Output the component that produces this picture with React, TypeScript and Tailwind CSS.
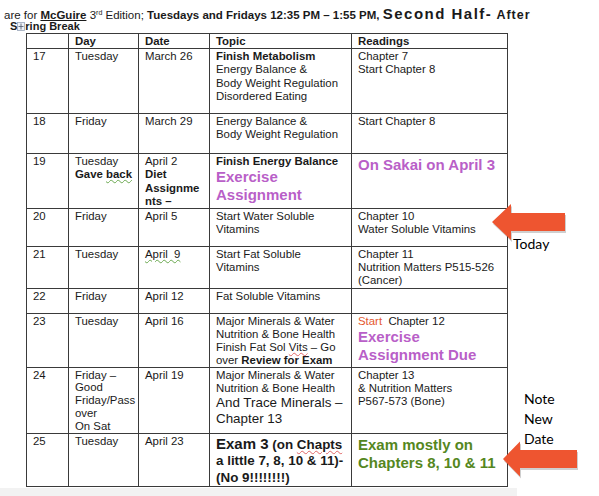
import React from 'react';

type Row = {
  n: string;
  h: string;
  day: React.ReactNode;
  date: React.ReactNode;
  topic: React.ReactNode;
  reading: React.ReactNode;
};

const cell = 'border border-[#3a3a3a] align-top pl-[6px] pr-[2px] pt-[1px] leading-[13.2px] whitespace-nowrap';

const rows: Row[] = [
  {
    n: '17',
    h: 'h-[65px]',
    day: 'Tuesday',
    date: 'March 26',
    topic: (
      <>
        <b>Finish Metabolism</b>
        <br />Energy Balance &amp;
        <br />Body Weight Regulation
        <br />Disordered Eating
      </>
    ),
    reading: (
      <>
        Chapter 7
        <br />Start Chapter 8
      </>
    ),
  },
  {
    n: '18',
    h: 'h-[40px]',
    day: 'Friday',
    date: 'March 29',
    topic: (
      <>
        Energy Balance &amp;
        <br />Body Weight Regulation
      </>
    ),
    reading: 'Start Chapter 8',
  },
  {
    n: '19',
    h: 'h-[53px]',
    day: (
      <>
        Tuesday
        <br />
        <b>
          Gave <span className="underline decoration-wavy decoration-[#6aa84f] decoration-1">back</span>
        </b>
      </>
    ),
    date: (
      <>
        April 2
        <br />
        <b>
          Diet
          <br />Assignme
          <br />nts –
        </b>
      </>
    ),
    topic: (
      <>
        <b>Finish Energy Balance</b>
        <div className="text-[15px] leading-[18px] font-bold text-[#b95fc8]">
          Exercise
          <br />Assignment
        </div>
      </>
    ),
    reading: <div className="text-[15px] leading-[18px] font-bold text-[#b95fc8] pt-[1px]">On Sakai on April 3</div>,
  },
  {
    n: '20',
    h: 'h-[38px]',
    day: 'Friday',
    date: 'April 5',
    topic: (
      <>
        Start Water Soluble
        <br />Vitamins
      </>
    ),
    reading: (
      <>
        Chapter 10
        <br />Water Soluble Vitamins
      </>
    ),
  },
  {
    n: '21',
    h: 'h-[40px]',
    day: 'Tuesday',
    date: <span className="underline decoration-wavy decoration-[#6aa84f] decoration-1 whitespace-pre">April  9</span>,
    topic: (
      <>
        Start Fat Soluble
        <br />Vitamins
      </>
    ),
    reading: (
      <>
        Chapter 11
        <br />Nutrition Matters P515-526
        <br />(Cancer)
      </>
    ),
  },
  {
    n: '22',
    h: 'h-[25px]',
    day: 'Friday',
    date: 'April 12',
    topic: 'Fat Soluble Vitamins',
    reading: '',
  },
  {
    n: '23',
    h: 'h-[53px]',
    day: 'Tuesday',
    date: 'April 16',
    topic: (
      <div className="leading-[13px]">
        Major Minerals &amp; Water
        <br />Nutrition &amp; Bone Health
        <br />Finish Fat Sol <span className="underline decoration-wavy decoration-[#e06666] decoration-1">Vits</span> – Go
        <br />over <b>Review for Exam</b>
      </div>
    ),
    reading: (
      <>
        <span className="text-[#e4572e]">Start</span>&nbsp; Chapter 12
        <div className="text-[15px] leading-[18px] font-bold text-[#b95fc8]">
          Exercise
          <br />Assignment Due
        </div>
      </>
    ),
  },
  {
    n: '24',
    h: 'h-[65px]',
    day: (
      <div className="leading-[12.8px]">
        Friday –
        <br />Good
        <br />Friday/Pass
        <br />over
        <br />On Sat
      </div>
    ),
    date: 'April 19',
    topic: (
      <>
        Major Minerals &amp; Water
        <br />Nutrition &amp; Bone Health
        <div className="text-[13.4px] leading-[16px]">
          And Trace Minerals –
          <br />Chapter 13
        </div>
      </>
    ),
    reading: (
      <>
        Chapter 13
        <br />&amp; Nutrition Matters
        <br />P567-573 (Bone)
      </>
    ),
  },
  {
    n: '25',
    h: 'h-[53px]',
    day: 'Tuesday',
    date: 'April 23',
    topic: (
      <div className="font-bold text-[13.4px] leading-[16.5px] pt-[1px]">
        <span className="text-[15px] leading-[16px]">Exam 3</span> (on{' '}
        <span className="underline decoration-wavy decoration-[#e06666] decoration-1">Chapts</span>
        <br />a little 7, 8, 10 &amp; 11)-
        <br />(No 9!!!!!!!!)
      </div>
    ),
    reading: (
      <div className="text-[15px] leading-[18px] font-bold text-[#55871e] pt-[1px]">
        Exam mostly on
        <br />Chapters 8, 10 &amp; 11
      </div>
    ),
  },
];

const Arrow: React.FC<{ tipX: number; tipY: number; w: number; head: number; half: number; shaft: number }> = ({
  tipX,
  tipY,
  w,
  head,
  half,
  shaft,
}) => {
  const pts = (dx: number, dy: number) =>
    [
      [tipX, tipY],
      [tipX + head, tipY - half],
      [tipX + head, tipY - shaft],
      [tipX + w, tipY - shaft],
      [tipX + w, tipY + shaft],
      [tipX + head, tipY + shaft],
      [tipX + head, tipY + half],
    ]
      .map(([x, y]) => `${x + dx},${y + dy}`)
      .join(' ');
  return (
    <>
      <polygon points={pts(1, 2)} fill="#00000030" />
      <polygon points={pts(0, 0)} fill="#ee5530" />
    </>
  );
};

const App: React.FC = () => {
  return (
    <div className="relative w-[599px] h-[496px] overflow-hidden bg-white font-['Liberation_Sans',Arial,sans-serif] text-[#1a1a1a]">
      <div className="pt-[8px] text-[11.5px]">
        <div className="pl-[4px] leading-[11px] whitespace-nowrap">
          are for <b className="underline">McGuire</b> 3<span className="relative -top-[4px] text-[7px] leading-none">rd</span> Edition;{' '}
          <b>Tuesdays and Fridays 12:35 PM – 1:55 PM, </b>
          <b className="text-[15px] leading-[11px] tracking-[1.5px]">Second Half-</b>
          <b className="text-[12.5px] tracking-[1px]"> After</b>
        </div>
        <div className="pl-[10px] leading-[11px] font-bold text-[11px]">
          S
          <svg width="8" height="9" viewBox="0 0 8 9" className="inline-block align-[-1px]">
            <rect x="0.5" y="0.5" width="7" height="8" fill="#eef2f8" stroke="#9aa6b8" strokeWidth="0.8" />
            <path d="M4 1.5v6M1.5 4.5h5" stroke="#5a6475" strokeWidth="0.9" />
          </svg>
          ring Break
        </div>
      </div>

      <table className="table-fixed border-collapse ml-[26px] mt-[1px] w-[481px] text-[11.4px]">
        <colgroup>
          <col className="w-[42px]" />
          <col className="w-[70px]" />
          <col className="w-[71px]" />
          <col className="w-[142px]" />
          <col className="w-[156px]" />
        </colgroup>
        <thead>
          <tr className="h-[12px] font-bold">
            <th className={cell + ' text-left'}></th>
            <th className={cell + ' text-left'}>Day</th>
            <th className={cell + ' text-left'}>Date</th>
            <th className={cell + ' text-left'}>Topic</th>
            <th className={cell + ' text-left'}>Readings</th>
          </tr>
        </thead>
        <tbody>
          {rows.map(r => (
            <tr key={r.n} className={r.h}>
              <td className={cell}>{r.n}</td>
              <td className={cell}>{r.day}</td>
              <td className={cell}>{r.date}</td>
              <td className={cell}>{r.topic}</td>
              <td className={cell}>{r.reading}</td>
            </tr>
          ))}
        </tbody>
      </table>
      <div className="mt-[1px] h-[8px] w-[517px] bg-[#f2f2f2]" />

      <svg className="absolute left-0 top-0 pointer-events-none" width="599" height="496">
        <Arrow tipX={492} tipY={222} w={73} head={19} half={18} shaft={9} />
        <Arrow tipX={503} tipY={459} w={74} head={17} half={17.5} shaft={9} />
      </svg>

      <div className="absolute left-[513px] top-[234px] font-['Lato',sans-serif] text-[14px] leading-[20px] text-black">
        Today
      </div>
      <div className="absolute left-[524px] top-[389px] font-['Lato',sans-serif] text-[14px] leading-[20px] text-black">
        Note
        <br />New
        <br />Date
      </div>
    </div>
  );
};

export default App;
